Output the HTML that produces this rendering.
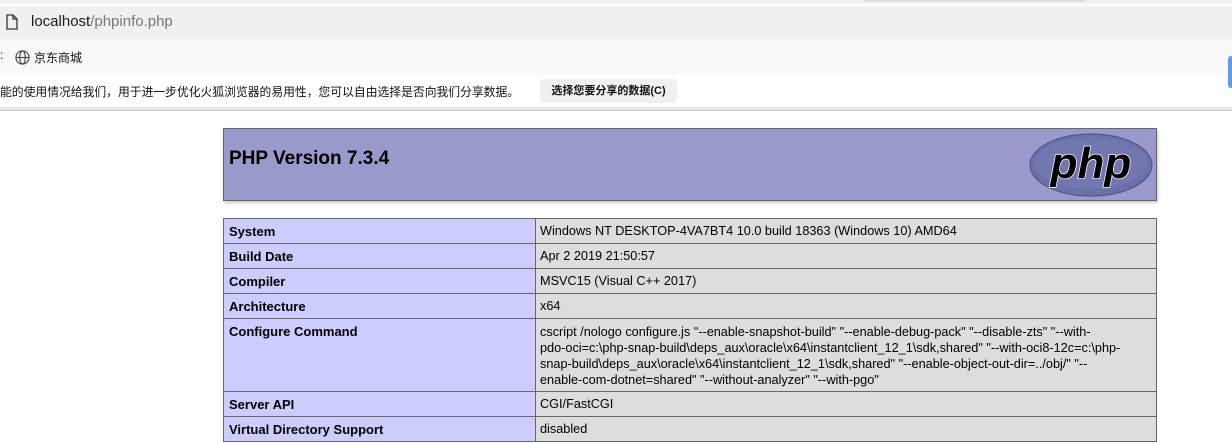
<!DOCTYPE html>
<html><head><meta charset="utf-8"><style>
*{margin:0;padding:0;box-sizing:border-box}
body{width:1232px;height:443px;overflow:hidden;background:#fff;font-family:"Liberation Sans","Noto Sans CJK SC",sans-serif;position:relative}
.a{position:absolute}
table{position:absolute;left:223px;top:218px;border-collapse:collapse;width:934px}
td{border:1px solid #666;font-size:13px;padding:0 5px;vertical-align:middle;height:25px;color:#000}
td.e{background:#ccf;font-weight:bold;width:312px}
td.v{background:#ddd;font-size:12.7px;padding-left:4px}
</style></head><body>
<div class="a" style="left:0;top:0;width:1232px;height:3px;background:#f0f0f0"></div>
<div class="a" style="left:865px;top:0;width:220px;height:2px;background:#ddd"></div>
<div class="a" style="left:0;top:3px;width:1232px;height:4px;background:#f9f9fb"></div>
<div class="a" style="left:0;top:7px;width:1232px;height:32px;background:#f0eff4"></div>
<svg class="a" style="left:5px;top:14px" width="14" height="16" viewBox="0 0 14 16"><path d="M2 1h6l4 4v10H2z M8 1v4h4" fill="none" stroke="#333" stroke-width="1.3"/></svg>
<div class="a" style="left:31px;top:13px;font-size:15px;color:#1a1a1a">localhost<span style="color:#777">/phpinfo.php</span></div>
<div class="a" style="left:0;top:39px;width:1232px;height:36px;background:#f9f9fb"></div>
<div class="a" style="left:0;top:48px;font-size:12px;color:#222">:</div>
<svg class="a" style="left:15px;top:50px" width="15" height="15" viewBox="0 0 16 16"><g fill="none" stroke="#444" stroke-width="1.2"><circle cx="8" cy="8" r="7"/><ellipse cx="8" cy="8" rx="3" ry="7"/><path d="M1 8h14"/></g></svg>
<div class="a" style="left:34px;top:49px;font-size:12px;color:#111">京东商城</div>
<div class="a" style="left:1228px;top:56px;width:6px;height:32px;border-radius:4px;background:#5b9cf0"></div>
<div class="a" style="left:0;top:83px;font-size:11.8px;color:#111;white-space:nowrap">能的使用情况给我们，用于进一步优化火狐浏览器的易用性，您可以自由选择是否向我们分享数据。</div>
<div class="a" style="left:540px;top:79px;width:137px;height:24px;border-radius:4px;background:#f0f0f4;font-size:11px;font-weight:bold;color:#111;text-align:center;line-height:24px">选择您要分享的数据(C)</div>
<div class="a" style="left:0;top:107px;width:1232px;height:3px;background:#e8e8ec"></div>
<div class="a" style="left:0;top:110px;width:1232px;height:1px;background:#ccc"></div>
<div class="a" style="left:223px;top:128px;width:934px;height:73px;background:#99c;border:1px solid #666;box-shadow:1px 2px 3px #ccc"></div>
<div class="a" style="left:229px;top:148px;font-size:19px;font-weight:bold;color:#000">PHP Version 7.3.4</div>
<svg class="a" style="left:1029px;top:133px" width="124" height="64" viewBox="0 0 124 64">
<ellipse cx="62" cy="32" rx="61" ry="31" fill="#6c70a8" stroke="#4b4f84" stroke-width="1"/>
<ellipse cx="62" cy="30" rx="56" ry="26" fill="#7377b0"/>
<text x="62" y="45" text-anchor="middle" font-family="Liberation Sans,sans-serif" font-style="italic" font-weight="bold" font-size="44" fill="#000" stroke="#fff" stroke-width="1.5" paint-order="stroke">php</text>
</svg>
<table>
<tr><td class="e">System</td><td class="v">Windows NT DESKTOP-4VA7BT4 10.0 build 18363 (Windows 10) AMD64</td></tr>
<tr><td class="e">Build Date</td><td class="v">Apr 2 2019 21:50:57</td></tr>
<tr><td class="e">Compiler</td><td class="v">MSVC15 (Visual C++ 2017)</td></tr>
<tr><td class="e">Architecture</td><td class="v">x64</td></tr>
<tr><td class="e" style="vertical-align:top;padding-top:5px;height:73px">Configure Command</td><td class="v" style="line-height:16px;height:73px;white-space:nowrap;padding-top:1px">cscript /nologo configure.js "--enable-snapshot-build" "--enable-debug-pack" "--disable-zts" "--with-<br>pdo-oci=c:\php-snap-build\deps_aux\oracle\x64\instantclient_12_1\sdk,shared" "--with-oci8-12c=c:\php-<br>snap-build\deps_aux\oracle\x64\instantclient_12_1\sdk,shared" "--enable-object-out-dir=../obj/" "--<br>enable-com-dotnet=shared" "--without-analyzer" "--with-pgo"</td></tr>
<tr><td class="e">Server API</td><td class="v">CGI/FastCGI</td></tr>
<tr><td class="e">Virtual Directory Support</td><td class="v">disabled</td></tr>
</table>
</body></html>
